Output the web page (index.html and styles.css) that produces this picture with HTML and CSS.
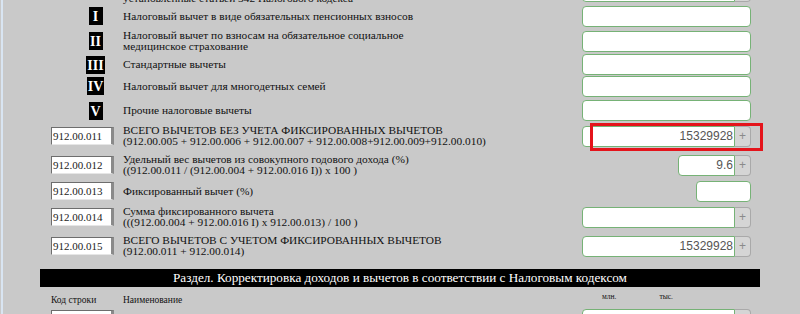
FILE: index.html
```html
<!DOCTYPE html>
<html lang="ru">

<head>
    <meta charset="UTF-8">
    <meta name="viewport" content="width=device-width, initial-scale=1.0">
    <title>Налоговые вычеты</title>
    <link rel="stylesheet" href="styles.css">
</head>

<body>
    <div class="page">
        <!-- cut off row above the fold -->
        <div class="row row-top">
            <div class="code-cell"></div>
            <div class="label">установленные статьей 342 Налогового кодекса</div>
            <div class="field-cell">
                <div class="spin wide"><span class="field"></span><span class="plus">+</span></div>
            </div>
        </div>

        <div class="row r-1">
            <div class="roman-cell"><span class="roman">I</span></div>
            <div class="label">Налоговый вычет в виде обязательных пенсионных взносов</div>
            <div class="field-cell"><span class="field wide"></span></div>
        </div>

        <div class="row r-2">
            <div class="roman-cell"><span class="roman">II</span></div>
            <div class="label">Налоговый вычет по взносам на обязательное социальное<br>медицинское страхование</div>
            <div class="field-cell"><span class="field wide"></span></div>
        </div>

        <div class="row r-3">
            <div class="roman-cell"><span class="roman">III</span></div>
            <div class="label">Стандартные вычеты</div>
            <div class="field-cell"><span class="field wide"></span></div>
        </div>

        <div class="row r-4">
            <div class="roman-cell"><span class="roman">IV</span></div>
            <div class="label">Налоговый вычет для многодетных семей</div>
            <div class="field-cell"><span class="field wide"></span></div>
        </div>

        <div class="row r-5">
            <div class="roman-cell"><span class="roman">V</span></div>
            <div class="label">Прочие налоговые вычеты</div>
            <div class="field-cell"><span class="field wide"></span></div>
        </div>

        <div class="row r-11">
            <div class="code-cell"><span class="code">912.00.011</span></div>
            <div class="label">ВСЕГО ВЫЧЕТОВ БЕЗ УЧЕТА ФИКСИРОВАННЫХ ВЫЧЕТОВ<br>(912.00.005 + 912.00.006 + 912.00.007 + 912.00.008+912.00.009+912.00.010)</div>
            <div class="field-cell">
                <div class="spin wide marked">
                    <span class="field">15329928</span><span class="plus">+</span>
                    <span class="mark"></span>
                </div>
            </div>
        </div>

        <div class="row r-12">
            <div class="code-cell"><span class="code">912.00.012</span></div>
            <div class="label">Удельный вес вычетов из совокупного годового дохода (%)<br>((912.00.011 / (912.00.004 + 912.00.016 I)) x 100 )</div>
            <div class="field-cell">
                <div class="spin short"><span class="field">9.6</span><span class="plus">+</span></div>
            </div>
        </div>

        <div class="row r-13">
            <div class="code-cell"><span class="code">912.00.013</span></div>
            <div class="label">Фиксированный вычет (%)</div>
            <div class="field-cell"><span class="field tiny"></span></div>
        </div>

        <div class="row r-14">
            <div class="code-cell"><span class="code">912.00.014</span></div>
            <div class="label">Сумма фиксированного вычета<br>(((912.00.004 + 912.00.016 I) x 912.00.013) / 100 )</div>
            <div class="field-cell">
                <div class="spin wide"><span class="field"></span><span class="plus">+</span></div>
            </div>
        </div>

        <div class="row r-15">
            <div class="code-cell"><span class="code">912.00.015</span></div>
            <div class="label">ВСЕГО ВЫЧЕТОВ С УЧЕТОМ ФИКСИРОВАННЫХ ВЫЧЕТОВ<br>(912.00.011 + 912.00.014)</div>
            <div class="field-cell">
                <div class="spin wide"><span class="field">15329928</span><span class="plus">+</span></div>
            </div>
        </div>

        <div class="section">Раздел. Корректировка доходов и вычетов в соответствии с Налоговым кодексом</div>

        <div class="heads">
            <div class="head-code">Код строки</div>
            <div class="head-name">Наименование</div>
            <div class="head-units">
                <span>млн.</span>
                <span>тыс.</span>
            </div>
        </div>

        <div class="row r-16">
            <div class="code-cell"><span class="code">912.00.016</span></div>
            <div class="label label-last">Корректировка доходов и вычетов (912.00.016 I - 912.00.016 II)</div>
            <div class="field-cell">
                <div class="spin wide"><span class="field"></span><span class="plus">+</span></div>
            </div>
        </div>
    </div>
</body>

</html>
```

FILE: styles.css
```css
html,
body {
    margin: 0;
    overflow: hidden;
    background: #c9c9c9;
}

body {
    font-family: "Liberation Serif", "Times New Roman", serif;
    font-size: 11.35px;
    color: #111;
}

.page {
    border-left: 2px solid #d9e5f2;
    margin-left: 1px;
    padding-left: 37px;
    width: 720px;
}

.row {
    display: grid;
    grid-template-columns: 83px 459px 178px;
    align-items: center;
}

.row-top {
    height: 24px;
    margin-top: -20px;
}

.row-top .label,
.row-top .field-cell {
    align-self: end;
}

.row-top .field-cell {
    margin-bottom: 2px;
}

.r-1 { height: 24px; }
.r-2 { height: 26px; }
.r-3 { height: 18px; }
.r-4 { height: 28px; }
.r-5 { height: 20px; }
.r-11 { height: 32px; }
.r-12 { height: 26px; }
.r-13 { height: 26px; }
.r-14 { height: 26px; }
.r-15 { height: 32px; }
.r-16 { height: 24px; }

.label {
    line-height: 11px;
    white-space: nowrap;
}

.label-last {
    margin-left: -3px;
    font-size: 12.5px;
}

.roman-cell {
    display: flex;
    justify-content: center;
    padding-left: 28px;
}

.roman {
    background: #000;
    color: #fff;
    font-weight: bold;
    font-size: 14px;
    height: 18px;
    line-height: 19px;
    min-width: 14px;
    padding: 0 1px;
    box-sizing: border-box;
    text-align: center;
}

.code-cell {
    padding-left: 11px;
}

.code {
    display: block;
    width: 63px;
    height: 18px;
    box-sizing: border-box;
    background: #fff;
    border-top: 1px solid #6d6d6d;
    border-left: 1px solid #6d6d6d;
    border-right: 3px solid #8a8a8a;
    border-bottom: 1px solid #e6e6e6;
    padding-left: 1px;
    font-size: 11px;
    line-height: 16px;
    color: #222;
}

.field-cell {
    display: flex;
    justify-content: flex-end;
    padding-right: 9px;
}

.field {
    display: block;
    height: 21px;
    box-sizing: border-box;
    background: #fff;
    border: 1px solid #76b276;
    border-radius: 4px;
    font-family: "Liberation Sans", Arial, sans-serif;
    font-size: 12px;
    line-height: 19px;
    color: #555;
    text-align: right;
}

.field.wide { width: 169px; }
.field.tiny { width: 55px; }

.spin {
    display: flex;
    position: relative;
}

.spin.wide { width: 169px; }
.spin.short { width: 73px; }

.spin .field {
    flex: 1;
    border-radius: 4px 0 0 4px;
    padding-right: 1px;
}

.plus {
    width: 16px;
    height: 21px;
    box-sizing: border-box;
    background: #d5d5d5;
    border: 1px solid #a9a9a9;
    border-left: none;
    border-radius: 0 4px 4px 0;
    font-family: "Liberation Sans", Arial, sans-serif;
    font-size: 12px;
    line-height: 19px;
    color: #8a8a8a;
    text-align: center;
}

.mark {
    position: absolute;
    left: 8px;
    right: -12px;
    top: -3px;
    bottom: -4px;
    border: 3px solid #e4141b;
}

.section {
    margin-top: 7px;
    width: 720px;
    height: 18px;
    background: #000;
    color: #fff;
    font-size: 13.2px;
    line-height: 18px;
    text-align: center;
}

.heads {
    display: grid;
    grid-template-columns: 83px 459px 178px;
    height: 20px;
    font-size: 9.5px;
}

.head-code {
    padding-left: 11px;
    padding-top: 8px;
}

.head-name {
    padding-top: 8px;
}

.head-units {
    display: flex;
    gap: 43px;
    padding-left: 20px;
    padding-top: 5px;
    font-size: 7.5px;
}
```
